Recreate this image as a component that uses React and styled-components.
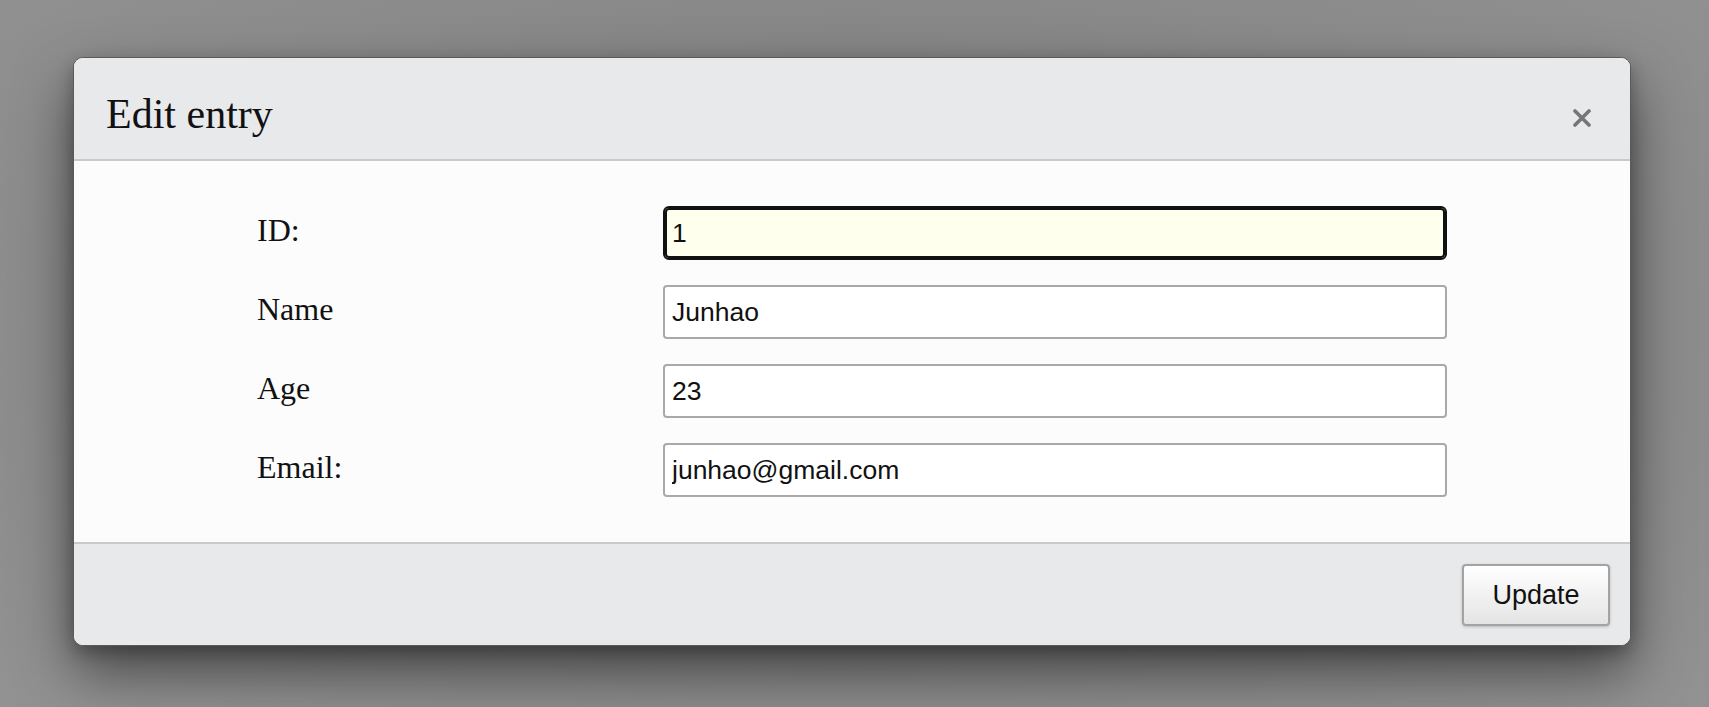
import styled, { createGlobalStyle } from "styled-components";

const GlobalStyle = createGlobalStyle`
  html, body {
    margin: 0;
    padding: 0;
    background: #8a8a8a;
  }
  body {
    font-family: "Liberation Serif", "Times New Roman", serif;
    height: 707px;
    overflow: hidden;
  }
`

const Backdrop = styled.div`
  padding: 57px 0 0 73px;
  min-height: 707px;
  box-sizing: border-box;
  background: radial-gradient(ellipse at 50% 45%, #7a7a7a 0%, #8c8c8c 70%, #929292 100%);
`

const Modal = styled.div`
  width: 1558px;
  box-sizing: border-box;
  border: 1px solid #5a5a5a;
  border-radius: 10px;
  overflow: hidden;
  background: #fcfcfc;
  box-shadow: 0 26px 55px rgba(0, 0, 0, 0.5), 0 6px 16px rgba(0, 0, 0, 0.25);
`

const Header = styled.div`
  height: 101px;
  box-sizing: content-box;
  display: flex;
  align-items: flex-start;
  justify-content: space-between;
  padding: 0 39px 0 32px;
  background: #e8e9eb;
  border-bottom: 2px solid #c9cacc;
`

const Title = styled.h4`
  margin: 35px 0 0 0;
  font-size: 42px;
  line-height: 42px;
  font-weight: normal;
  color: #111;
`

const CloseButton = styled.button`
  margin-top: 51px;
  padding: 0;
  border: none;
  background: none;
  width: 18px;
  height: 18px;
  cursor: pointer;
  color: #767676;
  display: flex;
`

const Body = styled.div`
  padding: 45px 0 45px 183px;
  background: #fcfcfc;
`

const Form = styled.div`
  display: grid;
  grid-template-columns: 406px 784px;
  row-gap: 25px;
`

const Label = styled.label`
  padding-top: 6px;
  font-size: 32px;
  color: #111;
`

const Input = styled.input`
  height: 54px;
  box-sizing: border-box;
  width: 100%;
  margin: 0;
  padding: 0 7px;
  font-family: "Liberation Sans", Arial, sans-serif;
  font-size: 26.5px;
  color: #111;
  border: 2px solid ${(p) => (p.$focused ? "#111" : "#a9a9a9")};
  border-radius: ${(p) => (p.$focused ? "6px" : "4px")};
  background: ${(p) => (p.$focused ? "#ffffee" : "#fff")};
  box-shadow: ${(p) => (p.$focused ? "inset 0 0 0 2px #111" : "none")};
  outline: none;
`

const Footer = styled.div`
  height: 103px;
  box-sizing: border-box;
  display: flex;
  justify-content: flex-end;
  align-items: flex-start;
  padding: 20px 20px 0 0;
  background: #e8e9eb;
  border-top: 2px solid #c9cacc;
`

const UpdateButton = styled.button`
  width: 148px;
  height: 62px;
  box-sizing: border-box;
  border: 2px solid #a3a3a3;
  border-radius: 4px;
  background: linear-gradient(#ffffff, #e4e4e4);
  box-shadow: 0 1px 3px rgba(0, 0, 0, 0.2);
  font-family: "Liberation Sans", Arial, sans-serif;
  font-size: 27px;
  color: #111;
  cursor: pointer;
`

const fields = [
  { label: "ID:", value: "1", focused: true },
  { label: "Name", value: "Junhao" },
  { label: "Age", value: "23" },
  { label: "Email:", value: "junhao@gmail.com" },
]

export default function App() {
  return (
    <>
      <GlobalStyle />
      <Backdrop>
        <Modal>
          <Header>
            <Title>Edit entry</Title>
            <CloseButton aria-label="close">
              <svg width="18" height="18" viewBox="0 0 18 18">
                <path d="M2 2 L16 16 M16 2 L2 16" stroke="currentColor" strokeWidth="3.6" strokeLinecap="round" />
              </svg>
            </CloseButton>
          </Header>
          <Body>
            <Form>
              {fields.map((f) => (
                <>
                  <Label key={f.label + "l"}>{f.label}</Label>
                  <Input key={f.label + "i"} defaultValue={f.value} $focused={f.focused} />
                </>
              ))}
            </Form>
          </Body>
          <Footer>
            <UpdateButton>Update</UpdateButton>
          </Footer>
        </Modal>
      </Backdrop>
    </>
  )
}
